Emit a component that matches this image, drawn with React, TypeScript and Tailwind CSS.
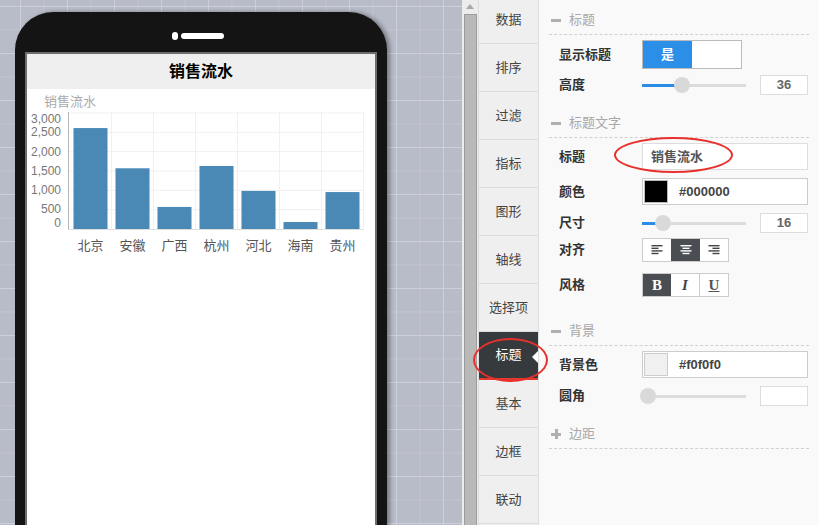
import React from 'react';

const tabs = ['数据', '排序', '过滤', '指标', '图形', '轴线', '选择项', '标题', '基本', '边框', '联动'];
const activeTab = '标题';

const bars = [
  { name: '北京', value: 2610 },
  { name: '安徽', value: 1570 },
  { name: '广西', value: 570 },
  { name: '杭州', value: 1630 },
  { name: '河北', value: 985 },
  { name: '海南', value: 180 },
  { name: '贵州', value: 955 }
];

const yLabels = [
  { t: '3,000', y: 33.5 },
  { t: '2,500', y: 47 },
  { t: '2,000', y: 67 },
  { t: '1,500', y: 86 },
  { t: '1,000', y: 105 },
  { t: '500', y: 124 },
  { t: '0', y: 137.5 }
];

const BASE = 140;
const SCALE = 0.03867;
const PLOT_X = 42.5;
const STEP = 42;

const Chart: React.FC = () => (
  <svg width="348" height="171" className="block">
    <text x="17" y="16.5" fontSize="13" fill="#aaaaaa">销售流水</text>
    {[1, 2, 3, 4, 5, 6].map(k => (
      <line key={k} x1={PLOT_X} x2={PLOT_X + STEP * 7} y1={BASE - k * 19.33} y2={BASE - k * 19.33} stroke="#f0f0f0" />
    ))}
    {[1, 2, 3, 4, 5, 6, 7].map(i => (
      <line key={i} x1={PLOT_X + STEP * i} x2={PLOT_X + STEP * i} y1={23} y2={BASE} stroke="#f0f0f0" />
    ))}
    {bars.map((b, i) => {
      const h = b.value * SCALE;
      return <rect key={b.name} x={PLOT_X + STEP * i + 4} y={BASE - h} width="34" height={h} fill="#4a88b6" />;
    })}
    <line x1="41.5" x2="41.5" y1="23" y2="141" stroke="#b5b5b5" />
    <line x1="41" x2={PLOT_X + STEP * 7} y1="140.5" y2="140.5" stroke="#dddddd" />
    {yLabels.map(l => (
      <text key={l.t} x="34" y={l.y} fontSize="12" fill="#777777" textAnchor="end">{l.t}</text>
    ))}
    {bars.map((b, i) => (
      <text key={b.name} x={PLOT_X + STEP * i + 21} y="160.5" fontSize="13" fill="#555555" textAnchor="middle">{b.name}</text>
    ))}
  </svg>
);

const SectionHeader: React.FC<{ title: string; plus?: boolean; className?: string }> = ({ title, plus, className }) => (
  <div className={`flex h-[35px] items-center border-b border-dashed border-[#d0d0d0] pt-[6px] ${className ?? ''}`}>
    <span className="relative ml-[2px] mr-[8px] h-[10px] w-[10px]">
      <span className="absolute left-0 top-[3.5px] h-[3px] w-[10px] bg-[#b0b0b0]" />
      {plus && <span className="absolute left-[3.5px] top-0 h-[10px] w-[3px] bg-[#b0b0b0]" />}
    </span>
    <span className="text-[13px] leading-[18px] text-[#a8a8a8]">{title}</span>
  </div>
);

const Label: React.FC<{ text: string }> = ({ text }) => (
  <span className="w-[93px] shrink-0 pl-[10px] text-[13px] font-bold leading-[18px] text-[#333]">{text}</span>
);

const Slider: React.FC<{ pos: number }> = ({ pos }) => (
  <div className="relative h-[16px] w-[104px] shrink-0">
    <div className="absolute left-0 right-0 top-[7px] h-[3px] bg-[#dcdcdc]" />
    <div className="absolute left-0 top-[7px] h-[3px] bg-[#2b8ce6]" style={{ width: pos }} />
    <div className="absolute top-0 h-[16px] w-[16px] rounded-full bg-[#d9d9d9]" style={{ left: pos - 8 }} />
  </div>
);

const NumBox: React.FC<{ value?: string }> = ({ value }) => (
  <div className="ml-auto mr-[1px] flex h-[20px] w-[48px] items-center justify-center border border-[#dddddd] bg-white text-[13px] font-bold text-[#666]">
    {value}
  </div>
);

const AlignIcon: React.FC<{ kind: 'left' | 'center' | 'right'; color: string }> = ({ kind, color }) => {
  const rows = [{ w: 11 }, { w: 7 }, { w: 11 }, { w: 7 }];
  return (
    <svg width="12" height="10">
      {rows.map((r, i) => {
        const x = kind === 'left' ? 0.5 : kind === 'right' ? 11.5 - r.w : (12 - r.w) / 2;
        return <rect key={i} x={x} y={i * 2.6} width={r.w} height="1.4" fill={color} />;
      })}
    </svg>
  );
};

const PropertyPanel: React.FC = () => (
  <div className="flex w-[280px] shrink-0 flex-col bg-[#f9f9f9] px-[10px]">
    <SectionHeader title="标题" />

    <div className="mt-[5px] flex h-[29px] items-center">
      <Label text="显示标题" />
      <div className="flex h-[29px] w-[100px] border border-[#bbbbbb]">
        <div className="flex w-[49px] items-center justify-center bg-[#2b8fe8] text-[13px] font-bold text-white">是</div>
        <div className="flex-1 bg-white" />
      </div>
    </div>

    <div className="mt-[6px] flex h-[20px] items-center">
      <Label text="高度" />
      <Slider pos={40} />
      <NumBox value="36" />
    </div>

    <SectionHeader title="标题文字" className="mt-[8px]" />

    <div className="mt-[5px] flex h-[27px] items-center">
      <Label text="标题" />
      <div className="mr-[1px] flex h-[27px] flex-1 items-center border border-[#dddddd] bg-white pl-[8px] text-[13px] font-bold text-[#555]">
        销售流水
      </div>
    </div>

    <div className="mt-[8px] flex h-[27px] items-center">
      <Label text="颜色" />
      <div className="mr-[1px] flex h-[27px] flex-1 items-center border border-[#cccccc] bg-white pl-[1px]">
        <div className="h-[23px] w-[24px] border border-[#bbbbbb] bg-black" />
        <span className="ml-[11px] text-[13px] font-bold text-[#444]">#000000</span>
      </div>
    </div>

    <div className="mt-[8px] flex h-[20px] items-center">
      <Label text="尺寸" />
      <Slider pos={21} />
      <NumBox value="16" />
    </div>

    <div className="mt-[5px] flex h-[24px] items-center">
      <Label text="对齐" />
      <div className="flex h-[24px] border border-[#cccccc] bg-white">
        <div className="flex w-[28px] items-center justify-center">
          <AlignIcon kind="left" color="#444" />
        </div>
        <div className="flex w-[29px] items-center justify-center bg-[#4a4e52]">
          <AlignIcon kind="center" color="#ffffff" />
        </div>
        <div className="flex w-[28px] items-center justify-center">
          <AlignIcon kind="right" color="#444" />
        </div>
      </div>
    </div>

    <div className="mt-[11px] flex h-[24px] items-center">
      <Label text="风格" />
      <div className="flex h-[24px] border border-[#cccccc] bg-white font-['Liberation_Serif',serif] text-[15px] leading-none">
        <div className="flex w-[28px] items-center justify-center bg-[#4a4e52] font-bold text-white">B</div>
        <div className="flex w-[29px] items-center justify-center border-r border-[#cccccc] font-bold italic text-[#444]">I</div>
        <div className="flex w-[28px] items-center justify-center font-bold text-[#555] underline">U</div>
      </div>
    </div>

    <SectionHeader title="背景" className="mt-[14px]" />

    <div className="mt-[5px] flex h-[27px] items-center">
      <Label text="背景色" />
      <div className="mr-[1px] flex h-[27px] flex-1 items-center border border-[#cccccc] bg-white pl-[1px]">
        <div className="h-[23px] w-[24px] border border-[#cccccc] bg-[#f0f0f0]" />
        <span className="ml-[11px] text-[13px] font-bold text-[#444]">#f0f0f0</span>
      </div>
    </div>

    <div className="mt-[8px] flex h-[20px] items-center">
      <Label text="圆角" />
      <Slider pos={6} />
      <NumBox />
    </div>

    <SectionHeader title="边距" plus className="mt-[8px]" />
  </div>
);

const App: React.FC = () => {
  return (
    <div className="relative flex h-[525px] w-[819px] overflow-hidden bg-[#f9f9f9] font-['Liberation_Sans','Noto_Sans_CJK_SC',sans-serif]">
      {/* canvas */}
      <div className="h-full w-[462px] shrink-0 overflow-hidden bg-[#b8bcc8] bg-[image:linear-gradient(to_right,#cdd0da_1px,transparent_1px),linear-gradient(to_bottom,#cdd0da_1px,transparent_1px),linear-gradient(to_right,#c2c5d0_1px,transparent_1px),linear-gradient(to_bottom,#c2c5d0_1px,transparent_1px)] bg-[size:47px_47px,47px_47px,23.5px_23.5px,23.5px_23.5px] bg-[position:20px_6px,20px_6px,20px_6px,20px_6px] pl-[15px] pt-[12px]">
        <div className="flex h-[560px] w-[372px] flex-col rounded-t-[38px] bg-[#141414] px-[10px] shadow-[3px_0_4px_rgba(0,0,0,0.35)]">
          <div className="flex h-[40px] shrink-0 items-start pl-[147px] pt-[20px]">
            <div className="h-[8px] w-[6px] rounded-full bg-white" />
            <div className="ml-[3px] mt-[1px] h-[6px] w-[43px] rounded-full bg-white" />
          </div>
          <div className="flex-1 border-2 border-b-0 border-[#6d6d6d] bg-white">
            <div className="flex h-[35px] items-center justify-center bg-[#efefef] text-[16px] font-bold text-black">
              销售流水
            </div>
            <Chart />
          </div>
        </div>
      </div>

      {/* scrollbar */}
      <div className="h-full w-[16px] shrink-0 bg-[#ececec] pt-[4px]">
        <div className="mx-auto h-0 w-0 border-x-[4px] border-b-[5px] border-x-transparent border-b-[#a8a8a8]" />
        <div className="ml-[2px] mt-[5px] h-[520px] w-[13px] border border-[#9c9c9c] bg-[#b9b9b9]" />
      </div>

      {/* tabs */}
      <div className="h-full w-[61px] shrink-0 border-x border-[#dddddd] bg-[#efefef]">
        <div className="-mt-[4px]">
          {tabs.map(t => {
            const active = t === activeTab;
            return (
              <div
                key={t}
                className={`relative flex h-[48px] items-center justify-center text-[13px] ${
                  active ? 'border-b-2 border-[#e5382f] bg-[#373a3d] text-white' : 'border-b border-[#dddddd] text-[#444]'
                }`}
              >
                {t}
                {active && (
                  <span className="absolute right-0 top-[19px] h-0 w-0 border-y-[6px] border-r-[6px] border-y-transparent border-r-white" />
                )}
              </div>
            );
          })}
        </div>
      </div>

      <PropertyPanel />

      {/* red annotation ellipses */}
      <div className="pointer-events-none absolute left-[473px] top-[338px] h-[44px] w-[75px] rounded-[50%] border-2 border-[#e8302c]" />
      <div className="pointer-events-none absolute left-[614px] top-[137px] h-[36px] w-[119px] rounded-[50%] border-2 border-[#e8302c]" />
    </div>
  );
};

export default App;
